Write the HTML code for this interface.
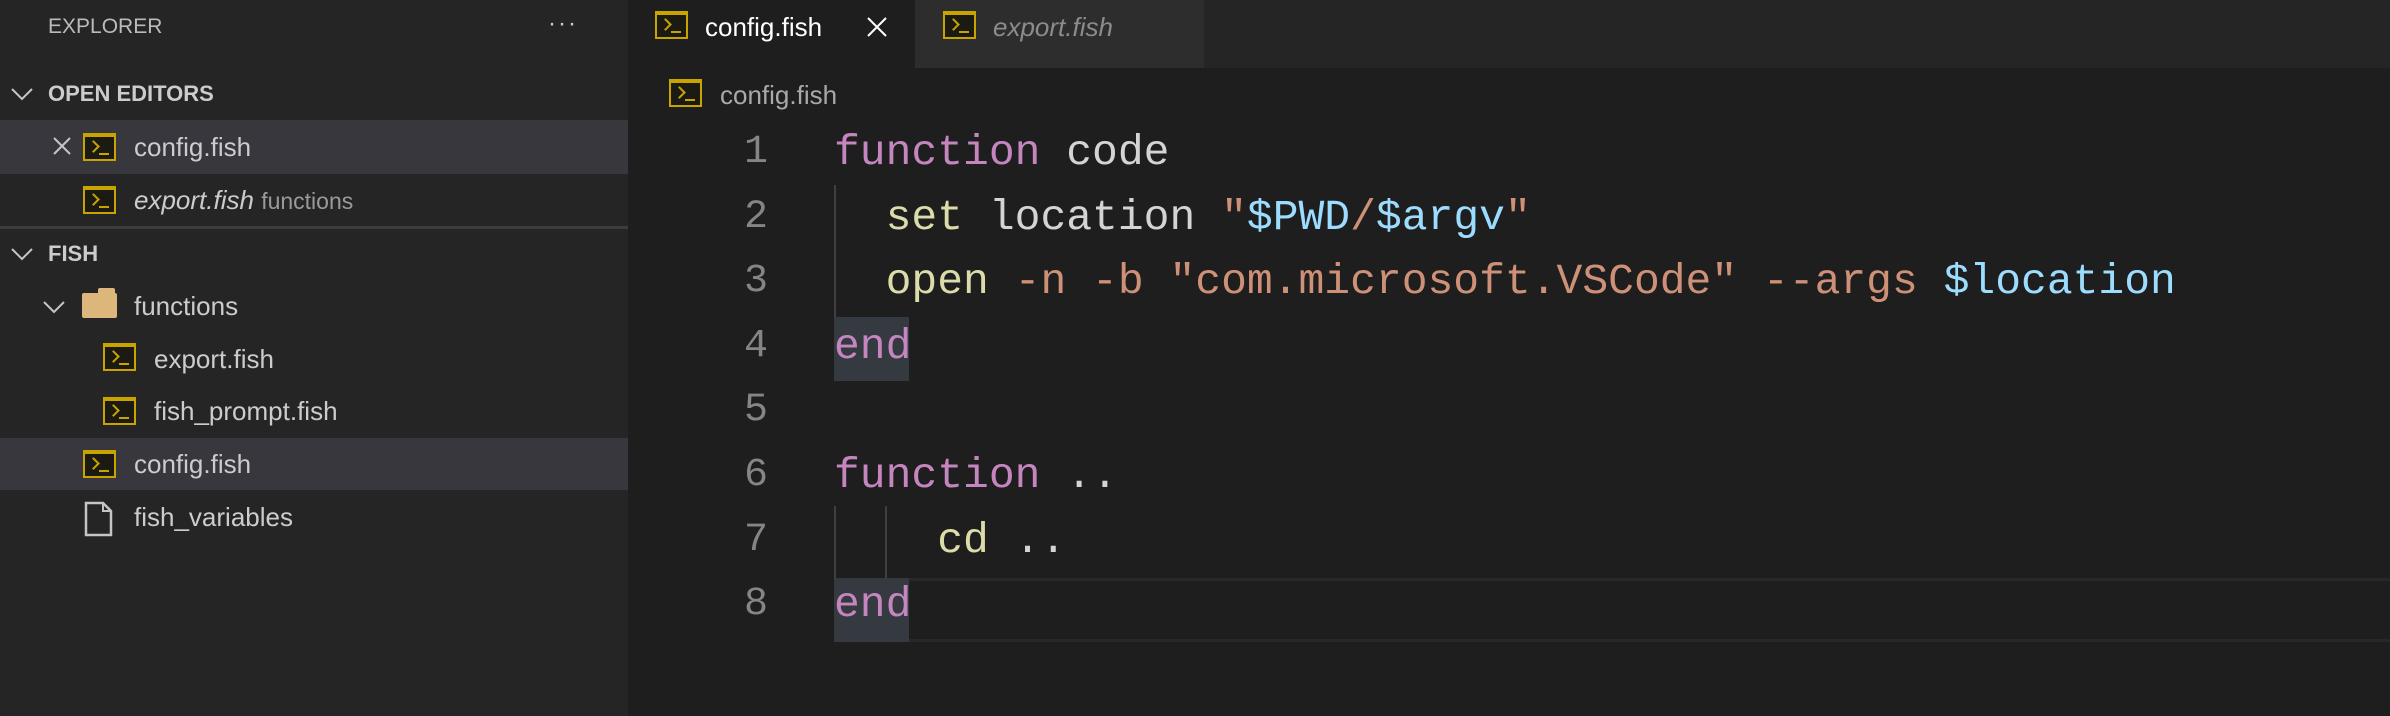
<!DOCTYPE html>
<html><head><meta charset="utf-8"><style>
*{margin:0;padding:0;box-sizing:border-box}
body{width:2390px;height:716px;background:#1e1e1e;position:relative;overflow:hidden;font-family:"Liberation Sans",sans-serif}
.abs{position:absolute}
.side{left:0;top:0;width:628px;height:716px;background:#252526}
.t{position:absolute;white-space:nowrap;color:#cccccc;font-size:26px;line-height:52px}
.fi{position:absolute;width:33px;height:28px;border:2px solid #c9a400;border-top-width:4px;background:#1b1b14}
.fi:before{content:"";position:absolute;left:4px;top:5px;width:7px;height:7px;border-right:2px solid #c9a400;border-top:2px solid #c9a400;transform:rotate(45deg);}
.fi:after{content:"";position:absolute;left:14px;top:16px;width:10px;height:2px;background:#c9a400}
.code{position:absolute;left:834px;font-family:"Liberation Mono",monospace;font-size:43px;line-height:64.6px;white-space:pre;color:#d4d4d4}
.ln{position:absolute;left:700px;width:68px;text-align:right;font-family:"Liberation Mono",monospace;font-size:40px;line-height:64.6px;color:#858585}
.k{color:#c586c0}.y{color:#dcdcaa}.s{color:#ce9178}.v{color:#9cdcfe}
</style></head><body>
<div class="abs side"></div>
<div class="t" style="left:48px;top:1px;font-size:21px;color:#bbbbbb">EXPLORER</div>
<div class="t" style="left:548px;top:-2px;font-size:24px;letter-spacing:2px;color:#cccccc">···</div>
<svg class="abs" style="left:10px;top:86px" width="24" height="16"><polyline points="2,3 12,13 22,3" fill="none" stroke="#c5c5c5" stroke-width="2"/></svg>
<div class="t" style="left:48px;top:68px;font-size:22px;font-weight:bold">OPEN EDITORS</div>
<div class="abs" style="left:0;top:120px;width:628px;height:54px;background:#37373d"></div>
<svg class="abs" style="left:52px;top:136px" width="20" height="20"><path d="M2 2L18 18M18 2L2 18" stroke="#c5c5c5" stroke-width="2"/></svg>
<div class="fi" style="left:83px;top:133px"></div>
<div class="t" style="left:134px;top:121px">config.fish</div>
<div class="fi" style="left:83px;top:186px"></div>
<div class="t" style="left:134px;top:174px"><i>export.fish</i> <span style="font-size:23px;color:#9a9a9a">functions</span></div>
<div class="abs" style="left:0;top:226px;width:628px;height:3px;background:#3c3c3c"></div>
<svg class="abs" style="left:10px;top:246px" width="24" height="16"><polyline points="2,3 12,13 22,3" fill="none" stroke="#c5c5c5" stroke-width="2"/></svg>
<div class="t" style="left:48px;top:228px;font-size:22px;font-weight:bold">FISH</div>
<svg class="abs" style="left:42px;top:299px" width="24" height="16"><polyline points="2,3 12,13 22,3" fill="none" stroke="#c5c5c5" stroke-width="2"/></svg>
<div class="abs" style="left:82px;top:293px;width:35px;height:25px;background:#dcb67a;border-radius:2px"></div>
<div class="abs" style="left:98px;top:288px;width:17px;height:8px;background:#dcb67a;border-radius:2px 2px 0 0"></div>
<div class="t" style="left:134px;top:280px">functions</div>
<div class="fi" style="left:103px;top:343px"></div>
<div class="t" style="left:154px;top:333px">export.fish</div>
<div class="fi" style="left:103px;top:397px"></div>
<div class="t" style="left:154px;top:385px">fish_prompt.fish</div>
<div class="abs" style="left:0;top:438px;width:628px;height:52px;background:#37373d"></div>
<div class="fi" style="left:83px;top:450px"></div>
<div class="t" style="left:134px;top:438px">config.fish</div>
<svg class="abs" style="left:84px;top:501px" width="30" height="36"><path d="M2 2h17l8 8v24H2z" fill="none" stroke="#c5c5c5" stroke-width="2.5"/><path d="M19 2v8h8" fill="none" stroke="#c5c5c5" stroke-width="2"/></svg>
<div class="t" style="left:134px;top:491px">fish_variables</div>

<div class="abs" style="left:628px;top:0;width:1762px;height:68px;background:#252526"></div>
<div class="abs" style="left:628px;top:0;width:287px;height:68px;background:#1e1e1e"></div>
<div class="abs" style="left:915px;top:0;width:289px;height:68px;background:#2d2d2d"></div>
<div class="fi" style="left:655px;top:11px"></div>
<div class="t" style="left:705px;top:1px;color:#ffffff">config.fish</div>
<svg class="abs" style="left:866px;top:16px" width="22" height="22"><path d="M2 2L20 20M20 2L2 20" stroke="#ffffff" stroke-width="2"/></svg>
<div class="fi" style="left:943px;top:11px"></div>
<div class="t" style="left:993px;top:1px;color:#8c8c8c"><i>export.fish</i></div>
<div class="fi" style="left:669px;top:79px"></div>
<div class="t" style="left:720px;top:69px;color:#a9a9a9">config.fish</div>

<div class="abs" style="left:834px;top:578px;width:1556px;height:64px;border-top:3px solid #282828;border-bottom:3px solid #282828"></div>
<div class="abs" style="left:834px;top:317px;width:75px;height:64px;background:#343a40"></div>
<div class="abs" style="left:834px;top:578px;width:75px;height:64px;background:#343a40"></div>
<div class="abs" style="left:834px;top:185px;width:2px;height:132px;background:#404040"></div>
<div class="abs" style="left:834px;top:506px;width:2px;height:72px;background:#404040"></div>
<div class="abs" style="left:885px;top:506px;width:2px;height:72px;background:#404040"></div>

<div class="ln" style="top:121px">1<br>2<br>3<br>4<br>5<br>6<br>7<br>8</div>
<div class="code" style="top:121px"><span class="k">function</span> code
  <span class="y">set</span> location <span class="s">"</span><span class="v">$PWD</span><span class="s">/</span><span class="v">$argv</span><span class="s">"</span>
  <span class="y">open</span> <span class="s">-n -b "com.microsoft.VSCode" --args</span> <span class="v">$location</span>
<span class="k">end</span>

<span class="k">function</span> ..
    <span class="y">cd</span> ..
<span class="k">end</span></div>
</body></html>
